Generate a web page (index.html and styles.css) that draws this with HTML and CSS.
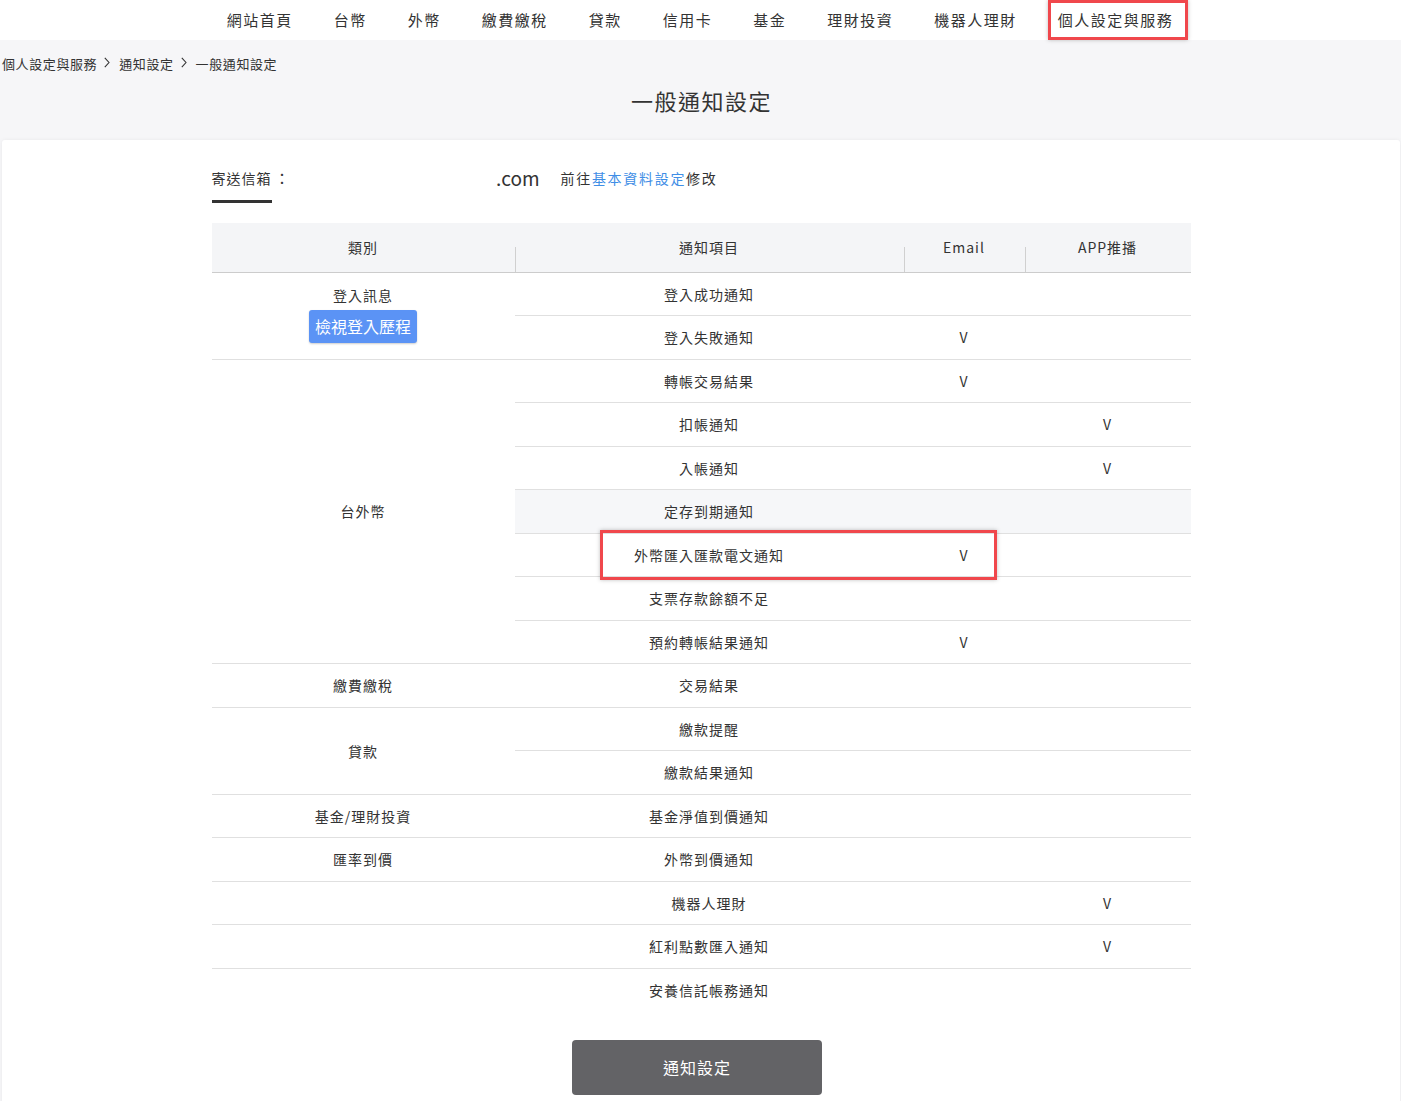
FILE: index.html
```html
<!DOCTYPE html>
<html lang="zh-Hant">
<head>
    <meta charset="UTF-8">
    <meta name="viewport" content="width=device-width, initial-scale=1.0">
    <title>一般通知設定</title>
    <link rel="stylesheet" href="styles.css">
</head>
<body>
    <header class="topnav">
        <ul class="menu">
            <li>網站首頁</li>
            <li>台幣</li>
            <li>外幣</li>
            <li>繳費繳稅</li>
            <li>貸款</li>
            <li>信用卡</li>
            <li>基金</li>
            <li>理財投資</li>
            <li>機器人理財</li>
            <li class="active">個人設定與服務</li>
        </ul>
    </header>

    <section class="page-head">
        <div class="breadcrumb">
            <span>個人設定與服務</span>
            <svg class="chev" width="6" height="11" viewBox="0 0 6 11"><polyline points="0.8,0.8 5,5.5 0.8,10.2" fill="none" stroke="#333" stroke-width="1.1"/></svg>
            <span>通知設定</span>
            <svg class="chev" width="6" height="11" viewBox="0 0 6 11"><polyline points="0.8,0.8 5,5.5 0.8,10.2" fill="none" stroke="#333" stroke-width="1.1"/></svg>
            <span>一般通知設定</span>
        </div>
        <h1>一般通知設定</h1>
    </section>

    <main class="card">
        <div class="inner">
            <div class="mail-row">
                <span class="mail-label">寄送信箱</span>
                <span class="colon">：</span>
                <span class="mail-value">.com</span>
                <span class="mail-note">前往<a href="#">基本資料設定</a>修改</span>
            </div>

            <table class="notify">
                <colgroup>
                    <col style="width: 303px">
                    <col style="width: 389px">
                    <col style="width: 121px">
                    <col style="width: 166px">
                </colgroup>
                <thead>
                    <tr>
                        <th>類別</th>
                        <th>通知項目</th>
                        <th>Email</th>
                        <th>APP推播</th>
                    </tr>
                </thead>
                <tbody>
                    <tr>
                        <td rowspan="2" class="login-cell">
                            <div class="cat-name">登入訊息</div>
                            <a class="history-btn" href="#">檢視登入歷程</a>
                        </td>
                        <td>登入成功通知</td>
                        <td></td>
                        <td></td>
                    </tr>
                    <tr>
                        <td>登入失敗通知</td>
                        <td>V</td>
                        <td></td>
                    </tr>
                    <tr>
                        <td rowspan="7">台外幣</td>
                        <td>轉帳交易結果</td>
                        <td>V</td>
                        <td></td>
                    </tr>
                    <tr>
                        <td>扣帳通知</td>
                        <td></td>
                        <td>V</td>
                    </tr>
                    <tr>
                        <td>入帳通知</td>
                        <td></td>
                        <td>V</td>
                    </tr>
                    <tr class="hover">
                        <td>定存到期通知</td>
                        <td></td>
                        <td></td>
                    </tr>
                    <tr>
                        <td class="marked">外幣匯入匯款電文通知<span class="mark"></span></td>
                        <td>V</td>
                        <td></td>
                    </tr>
                    <tr>
                        <td>支票存款餘額不足</td>
                        <td></td>
                        <td></td>
                    </tr>
                    <tr>
                        <td>預約轉帳結果通知</td>
                        <td>V</td>
                        <td></td>
                    </tr>
                    <tr>
                        <td>繳費繳稅</td>
                        <td>交易結果</td>
                        <td></td>
                        <td></td>
                    </tr>
                    <tr>
                        <td rowspan="2">貸款</td>
                        <td>繳款提醒</td>
                        <td></td>
                        <td></td>
                    </tr>
                    <tr>
                        <td>繳款結果通知</td>
                        <td></td>
                        <td></td>
                    </tr>
                    <tr>
                        <td>基金/理財投資</td>
                        <td>基金淨值到價通知</td>
                        <td></td>
                        <td></td>
                    </tr>
                    <tr>
                        <td>匯率到價</td>
                        <td>外幣到價通知</td>
                        <td></td>
                        <td></td>
                    </tr>
                    <tr>
                        <td></td>
                        <td>機器人理財</td>
                        <td></td>
                        <td>V</td>
                    </tr>
                    <tr>
                        <td></td>
                        <td>紅利點數匯入通知</td>
                        <td></td>
                        <td>V</td>
                    </tr>
                    <tr class="last">
                        <td></td>
                        <td>安養信託帳務通知</td>
                        <td></td>
                        <td></td>
                    </tr>
                </tbody>
            </table>

            <div class="actions">
                <button type="button">通知設定</button>
            </div>
        </div>
    </main>
</body>
</html>
```

FILE: styles.css
```css
* {
    box-sizing: border-box;
}

body {
    margin: 0;
    background-color: #f6f6f8;
    color: #333;
    font-family: "Noto Sans CJK TC", "Noto Sans", sans-serif;
}

/* top menu */
.topnav {
    background-color: white;
    height: 40px;
}

.menu {
    display: flex;
    justify-content: center;
    gap: 21px;
    list-style: none;
    margin: 0;
    padding: 0 0 0 4px;
}

.menu li {
    padding: 0 10px;
    height: 40px;
    line-height: 40px;
    font-size: 15px;
    letter-spacing: 1.5px;
    cursor: pointer;
}

.menu li.active {
    padding: 0 15px 0 10px;
    outline: 3px solid #f0474c;
    outline-offset: -3px;
    box-shadow: 0 0 4px rgba(0, 0, 0, 0.25);
}

/* grey title area */
.page-head {
    padding: 13px 0 25px 2px;
}

.breadcrumb {
    display: flex;
    align-items: center;
    height: 20px;
    font-size: 13px;
    letter-spacing: 0.6px;
}

.breadcrumb .chev {
    margin: 0 9px 2px 7px;
}

.page-head h1 {
    margin: 12px 0 0;
    text-align: center;
    font-size: 22px;
    font-weight: normal;
    letter-spacing: 1.5px;
    line-height: 30px;
}

/* white card */
.card {
    margin: 0 1px 0 2px;
    background-color: white;
    border-radius: 3px 3px 0 0;
    box-shadow: 0 0 4px rgba(0, 0, 0, 0.06);
    padding: 28px 0 40px;
}

.inner {
    width: 979px;
    margin: 0 auto;
}

.mail-row {
    display: flex;
    align-items: flex-start;
    line-height: 20px;
    font-size: 14px;
    letter-spacing: 1px;
    margin-bottom: 20px;
}

.mail-label {
    padding-bottom: 12px;
    border-bottom: 3px solid #333;
}

.colon {
    width: 15px;
    margin-left: 3px;
    font-size: 15px;
}

.mail-value {
    width: 250px;
    text-align: right;
    font-size: 19px;
    letter-spacing: 0;
}

.mail-note {
    margin-left: 21px;
    letter-spacing: 1.7px;
}

.mail-note a {
    color: #3f8ee6;
    text-decoration: none;
}

/* notification table */
.notify {
    width: 979px;
    border-collapse: collapse;
    table-layout: fixed;
    font-size: 14px;
    letter-spacing: 1px;
    text-align: center;
}

.notify th {
    position: relative;
    height: 49px;
    padding: 0;
    font-weight: normal;
    background-color: #f4f5f7;
    border-bottom: 1px solid #cccccc;
}

.notify th + th::before {
    content: "";
    position: absolute;
    left: 0;
    top: 50%;
    bottom: 0;
    width: 1px;
    background-color: #d0d0d0;
}

.notify td {
    height: 43.5px;
    padding: 0;
    border-bottom: 1px solid #e0e0e0;
    vertical-align: middle;
}

.notify td.login-cell {
    padding-bottom: 4px;
}

.notify tr.last td {
    border-bottom: none;
}

.notify tr.hover td {
    background-color: #f6f7f9;
}

.cat-name {
    line-height: 20px;
}

.history-btn {
    display: inline-block;
    margin-top: 5px;
    padding: 0 6px;
    line-height: 33px;
    font-size: 16px;
    letter-spacing: 0;
    color: white;
    background-color: #5b93f5;
    border-radius: 3px;
    box-shadow: 0 1px 2px rgba(0, 0, 0, 0.2);
    text-decoration: none;
}

.marked {
    position: relative;
}

.mark {
    position: absolute;
    left: 85px;
    top: -4px;
    width: 397px;
    height: 50px;
    border: 3px solid #f0474c;
    box-shadow: 0 0 4px rgba(0, 0, 0, 0.25);
    pointer-events: none;
}

.actions {
    display: flex;
    justify-content: center;
    margin-top: 28px;
    padding-right: 8px;
}

.actions button {
    width: 250px;
    height: 55px;
    border: none;
    border-radius: 4px;
    background-color: #636366;
    color: white;
    font-family: inherit;
    font-size: 16px;
    letter-spacing: 1px;
    cursor: pointer;
}
```
